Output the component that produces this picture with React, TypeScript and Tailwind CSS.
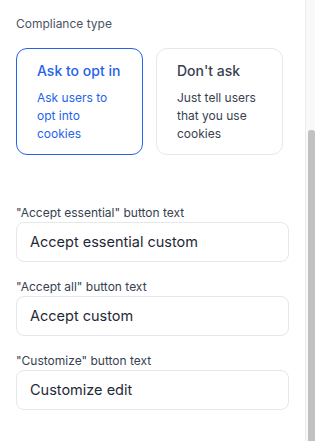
import React from "react";

export default function App() {
  const fields = [
    { label: '"Accept essential" button text', value: "Accept essential custom" },
    { label: '"Accept all" button text', value: "Accept custom" },
    { label: '"Customize" button text', value: "Customize edit" },
  ];
  return (
    <div
      className="flex w-[315px] h-[441px] bg-white overflow-hidden"
      style={{ fontFamily: "Inter, 'Liberation Sans', sans-serif" }}
    >
      <div className="w-[305px] flex-none pl-4 pr-[16px] pt-[16px]">
        <div className="text-[12px] leading-[16px] text-[#4b5563]">Compliance type</div>
        <div className="mt-[16px] flex gap-[13px] w-[267px]">
          <div className="w-[127px] h-[107px] rounded-[11px] border border-[#2563eb] pl-[20px] pt-[12px]">
            <div className="text-[14px] leading-[20px] font-medium text-[#2563eb]">Ask to opt in</div>
            <div className="mt-[8px] text-[12px] leading-[18px] text-[#2563eb]">
              Ask users to
              <br />
              opt into
              <br />
              cookies
            </div>
          </div>
          <div className="w-[127px] h-[107px] rounded-[11px] border border-[#e5e7eb] pl-[20px] pt-[12px]">
            <div className="text-[14px] leading-[20px] font-medium text-[#374151]">Don't ask</div>
            <div className="mt-[8px] text-[12px] leading-[18px] text-[#374151]">
              Just tell users
              <br />
              that you use
              <br />
              cookies
            </div>
          </div>
        </div>
        <div className="mt-[50px] flex flex-col gap-[17px]">
          {fields.map((f) => (
            <div key={f.label} className="flex flex-col">
              <div className="text-[12px] leading-[16px] text-[#374151]">{f.label}</div>
              <div className="mt-[1px] w-[273px] h-[40px] rounded-[8px] border border-[#e5e7eb] flex items-center pl-[13px] text-[14.5px] text-[#1f2937]">
                {f.value}
              </div>
            </div>
          ))}
        </div>
      </div>
      <div className="w-px flex-none bg-[#ececec]" />
      <div className="flex-1 bg-[#f9f9f9] flex justify-end">
        <div className="w-[7px] mt-[130px] bg-[#c1c1c1] rounded-t-[3px]" />
      </div>
    </div>
  );
}
